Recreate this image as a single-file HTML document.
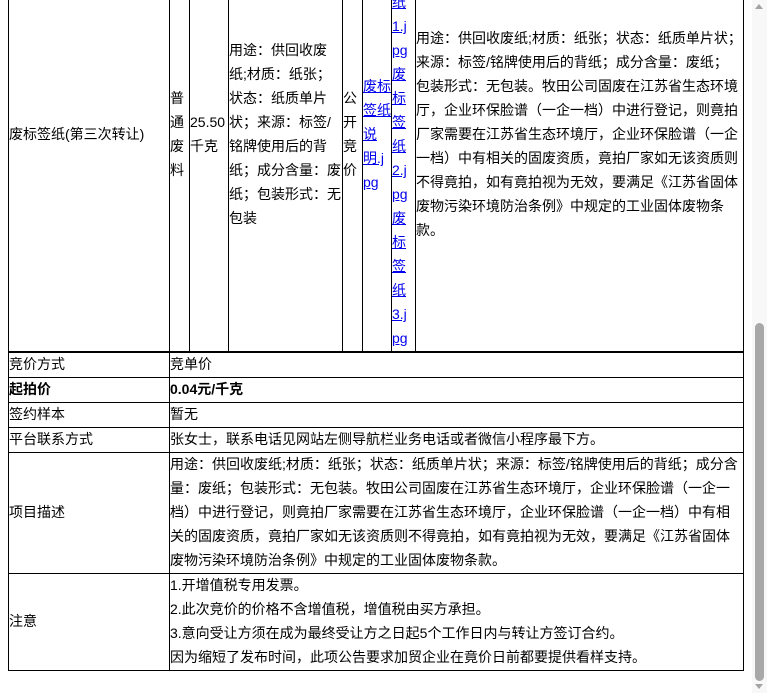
<!DOCTYPE html>
<html><head><meta charset="utf-8"><style>
*{margin:0;padding:0;box-sizing:border-box}
body{width:767px;height:693px;overflow:hidden;background:#fff;position:relative;font-family:"Liberation Sans","Noto Sans CJK SC",sans-serif;font-size:14px;color:#000}
.v{position:absolute;background:#000;width:1px}
.h{position:absolute;background:#000;height:1px}
.t{position:absolute;white-space:nowrap;line-height:24px;height:24px}
a,.a{color:#00e;text-decoration:underline}
</style></head><body>
<div class="v" style="left:8px;top:0;height:671px"></div>
<div class="v" style="left:169px;top:0;height:671px"></div>
<div class="v" style="left:189px;top:0;height:351px"></div>
<div class="v" style="left:228px;top:0;height:351px"></div>
<div class="v" style="left:342px;top:0;height:351px"></div>
<div class="v" style="left:362px;top:0;height:351px"></div>
<div class="v" style="left:391px;top:0;height:351px"></div>
<div class="v" style="left:415px;top:0;height:351px"></div>
<div class="v" style="left:743px;top:0;height:671px"></div>
<div class="h" style="left:8px;top:351px;width:736px;height:2px"></div>
<div class="h" style="left:8px;top:377px;width:736px"></div>
<div class="h" style="left:8px;top:402px;width:736px"></div>
<div class="h" style="left:8px;top:427px;width:736px"></div>
<div class="h" style="left:8px;top:452px;width:736px"></div>
<div class="h" style="left:8px;top:573px;width:736px"></div>
<div class="h" style="left:8px;top:670px;width:736px"></div>

<div class="t" style="left:9px;top:122px">废标签纸(第三次转让)</div>
<div class="t" style="left:170px;top:86px">普</div>
<div class="t" style="left:170px;top:110px">通</div>
<div class="t" style="left:170px;top:134px">废</div>
<div class="t" style="left:170px;top:158px">料</div>
<div class="t" style="left:190px;top:110px">25.50</div>
<div class="t" style="left:190px;top:134px">千克</div>
<div class="t" style="left:229px;top:38px">用途：供回收废</div>
<div class="t" style="left:229px;top:62px">纸;材质：纸张；</div>
<div class="t" style="left:229px;top:86px">状态：纸质单片</div>
<div class="t" style="left:229px;top:110px">状；来源：标签/</div>
<div class="t" style="left:229px;top:134px">铭牌使用后的背</div>
<div class="t" style="left:229px;top:158px">纸；成分含量：废</div>
<div class="t" style="left:229px;top:182px">纸；包装形式：无</div>
<div class="t" style="left:229px;top:206px">包装</div>
<div class="t" style="left:343px;top:86px">公</div>
<div class="t" style="left:343px;top:110px">开</div>
<div class="t" style="left:343px;top:134px">竞</div>
<div class="t" style="left:343px;top:158px">价</div>
<div class="t a" style="left:363px;top:74px">废标</div>
<div class="t a" style="left:363px;top:98px">签纸</div>
<div class="t a" style="left:363px;top:122px">说</div>
<div class="t a" style="left:363px;top:146px">明.j</div>
<div class="t a" style="left:363px;top:170px">pg</div>
<div class="t a" style="left:392px;top:-10px">纸</div>
<div class="t a" style="left:392px;top:14px">1.j</div>
<div class="t a" style="left:392px;top:38px">pg</div>
<div class="t a" style="left:392px;top:62px">废</div>
<div class="t a" style="left:392px;top:86px">标</div>
<div class="t a" style="left:392px;top:110px">签</div>
<div class="t a" style="left:392px;top:134px">纸</div>
<div class="t a" style="left:392px;top:158px">2.j</div>
<div class="t a" style="left:392px;top:182px">pg</div>
<div class="t a" style="left:392px;top:206px">废</div>
<div class="t a" style="left:392px;top:230px">标</div>
<div class="t a" style="left:392px;top:254px">签</div>
<div class="t a" style="left:392px;top:278px">纸</div>
<div class="t a" style="left:392px;top:302px">3.j</div>
<div class="t a" style="left:392px;top:326px">pg</div>
<div class="t" style="left:416px;top:26px">用途：供回收废纸;材质：纸张；状态：纸质单片状；</div>
<div class="t" style="left:416px;top:50px">来源：标签/铭牌使用后的背纸；成分含量：废纸；</div>
<div class="t" style="left:416px;top:74px">包装形式：无包装。牧田公司固废在江苏省生态环境</div>
<div class="t" style="left:416px;top:98px">厅，企业环保脸谱（一企一档）中进行登记，则竟拍</div>
<div class="t" style="left:416px;top:122px">厂家需要在江苏省生态环境厅，企业环保脸谱（一企</div>
<div class="t" style="left:416px;top:146px">一档）中有相关的固废资质，竟拍厂家如无该资质则</div>
<div class="t" style="left:416px;top:170px">不得竟拍，如有竟拍视为无效，要满足《江苏省固体</div>
<div class="t" style="left:416px;top:194px">废物污染环境防治条例》中规定的工业固体废物条</div>
<div class="t" style="left:416px;top:218px">款。</div>

<div class="t" style="left:9px;top:352px">竞价方式</div>
<div class="t" style="left:170px;top:352px">竞单价</div>
<div class="t" style="left:9px;top:377px;font-weight:bold">起拍价</div>
<div class="t" style="left:170px;top:377px;font-weight:bold">0.04元/千克</div>
<div class="t" style="left:9px;top:402px">签约样本</div>
<div class="t" style="left:170px;top:402px">暂无</div>
<div class="t" style="left:9px;top:427px">平台联系方式</div>
<div class="t" style="left:170px;top:427px">张女士，联系电话见网站左侧导航栏业务电话或者微信小程序最下方。</div>
<div class="t" style="left:9px;top:500px">项目描述</div>
<div class="t" style="left:170px;top:452px">用途：供回收废纸;材质：纸张；状态：纸质单片状；来源：标签/铭牌使用后的背纸；成分含</div>
<div class="t" style="left:170px;top:476px">量：废纸；包装形式：无包装。牧田公司固废在江苏省生态环境厅，企业环保脸谱（一企一</div>
<div class="t" style="left:170px;top:500px">档）中进行登记，则竟拍厂家需要在江苏省生态环境厅，企业环保脸谱（一企一档）中有相</div>
<div class="t" style="left:170px;top:524px">关的固废资质，竟拍厂家如无该资质则不得竟拍，如有竟拍视为无效，要满足《江苏省固体</div>
<div class="t" style="left:170px;top:548px">废物污染环境防治条例》中规定的工业固体废物条款。</div>
<div class="t" style="left:9px;top:609px">注意</div>
<div class="t" style="left:170px;top:573px">1.开增值税专用发票。</div>
<div class="t" style="left:170px;top:597px">2.此次竞价的价格不含增值税，增值税由买方承担。</div>
<div class="t" style="left:170px;top:621px">3.意向受让方须在成为最终受让方之日起5个工作日内与转让方签订合约。</div>
<div class="t" style="left:170px;top:645px">因为缩短了发布时间，此项公告要求加贸企业在竟价日前都要提供看样支持。</div>

<div style="position:absolute;left:752px;top:0;width:15px;height:693px;background:#f8f8f8"></div>
<div style="position:absolute;left:755px;top:4px;width:0;height:0;border-left:4px solid transparent;border-right:4px solid transparent;border-bottom:5px solid #a3a3a3"></div>
<div style="position:absolute;left:755px;top:684px;width:0;height:0;border-left:4px solid transparent;border-right:4px solid transparent;border-top:5px solid #a3a3a3"></div>
<div style="position:absolute;left:755px;top:323px;width:9px;height:358px;background:#a8a8a8;border-radius:5px"></div>
</body></html>
